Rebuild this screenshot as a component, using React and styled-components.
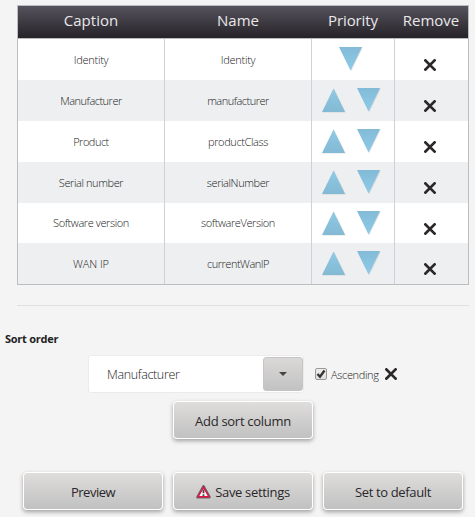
import React from "react";
import styled, { createGlobalStyle } from "styled-components";

const GlobalStyle = createGlobalStyle`
  * { box-sizing: border-box; }
  body {
    margin: 0;
    background: #f4f4f4;
    color: #222;
    font-family: "Open Sans", "Noto Sans", sans-serif;
    overflow: hidden;
  }
`;

const Page = styled.main`
  width: 475px;
  height: 517px;
  padding-top: 5px;
  overflow: hidden;
`;

const Table = styled.section`
  width: 452px;
  height: 280px;
  margin-left: 17px;
  border: 1px solid #bcbdc0;
  overflow: hidden;
`;

const Row = styled.div`
  display: grid;
  grid-template-columns: 147px 147px 83px 73px;
  height: ${(p) => p.$height || 41}px;
  background: ${(p) => (p.$shaded ? "#edeff1" : "#fff")};
`;

const HeaderRow = styled(Row)`
  height: 33px;
  background: linear-gradient(#57535d, #252228);
  border-bottom: 1px solid #bcbdc0;
`;

const Text = styled.span`
  display: block;
  white-space: nowrap;
  font-size: ${(p) => p.$size || 11}px;
  font-weight: ${(p) => p.$weight || 300};
  letter-spacing: ${(p) => p.$spacing || 0}px;
`;

const HeaderCell = styled.div`
  display: flex;
  align-items: center;
  justify-content: center;
  padding: 0 1px 5px 0;
  color: #e8e8ea;
`;

const Cell = styled.div`
  display: flex;
  align-items: center;
  justify-content: center;
  padding-bottom: 1px;
  border-right: 1px solid #cfd1d4;
`;

const PriorityCell = styled(Cell)`
  align-items: flex-start;
  gap: 11px;
  padding: 8px 4px 0 0;
`;

const RemoveCell = styled(Cell)`
  align-items: flex-start;
  padding: 20px 3px 0 0;
  border-right: 0;
`;

const Icon = styled.svg`
  display: block;
  flex: none;
`;

const Divider = styled.hr`
  width: 452px;
  height: 1px;
  margin: 20px 0 0 17px;
  border: 0;
  background: #dfdfdf;
`;

const SectionTitle = styled.h2`
  height: 18px;
  margin: 24px 0 0 5px;
  font-size: 11px;
  line-height: 18px;
  font-weight: 700;
  letter-spacing: -0.25px;
`;

const SortRow = styled.div`
  display: flex;
  align-items: center;
  height: 38px;
  margin: 7px 0 0 88px;
`;

const Select = styled.div`
  display: flex;
  align-items: center;
  justify-content: space-between;
  width: 216px;
  height: 38px;
  padding-left: 18px;
  background: #fff;
  border: 1px solid #ebebeb;
  border-radius: 3px;
`;

const SelectToggle = styled.div`
  display: flex;
  align-items: center;
  justify-content: center;
  width: 40px;
  height: 34px;
  border: 1px solid #c6c4c4;
  border-radius: 3px;
  background: linear-gradient(#dbd9d8, #c2c2c2);
`;

const Checkbox = styled.div`
  width: 12px;
  height: 12px;
  margin: 0 4px 0 11px;
  border: 1px solid #999;
  border-radius: 2px;
  background: linear-gradient(#eee, #ddd);
`;

const Option = styled.div`
  display: flex;
  align-items: center;
  width: 81px;
`;

const Actions = styled.div`
  display: flex;
  justify-content: center;
  gap: 10px;
  width: 440px;
  margin: ${(p) => p.$top}px 0 0 23px;
`;

const Button = styled.button`
  display: flex;
  align-items: center;
  justify-content: center;
  gap: 4px;
  width: 140px;
  height: 38px;
  padding: 1px 0 0;
  border: 1px solid #fff;
  border-radius: 4px;
  background: linear-gradient(#dfdddc, #c1c1c1);
  box-shadow: 0 2px 4px rgba(0, 0, 0, 0.34);
  color: #2a2729;
  font-family: inherit;
`;

function Arrow({ up }) {
  const points = up ? "11.5,0.5 23,24 0,24" : "0,0 23,0 11.5,23.5";
  return (
    <Icon width="24" height="25" viewBox="0 0 24 25">
      <defs>
        <linearGradient id={up ? "up" : "down"} x2="0" y2="1">
          <stop stopColor={up ? "#8fcae6" : "#83bbd7"} />
          <stop offset="1" stopColor={up ? "#83b9d3" : "#8dcbe8"} />
        </linearGradient>
      </defs>
      <polygon points={points} transform="translate(.8 .5)" fill="#999" opacity=".3" />
      <polygon points={points} fill={`url(#${up ? "up" : "down"})`} />
    </Icon>
  );
}

function Cross() {
  return (
    <Icon width="12" height="12" viewBox="0 0 12 12">
      <path d="M1.4 1.4 10.6 10.6M10.6 1.4 1.4 10.6" stroke="#2c2829" strokeWidth="2.7" strokeLinecap="square" />
    </Icon>
  );
}

function Warning() {
  return (
    <Icon width="15" height="14" viewBox="0 0 15 14">
      <path d="M7.5 1.3 13.5 12.2H1.5Z" fill="#fff" stroke="#666" strokeWidth="2.6" strokeLinejoin="round" />
      <path d="M7.5 2.1 12.8 11.7H2.2Z" fill="#fff" stroke="#e51145" strokeWidth="1.4" strokeLinejoin="round" />
      <path d="M7.5 4.5V8.3M7.5 9.3V11" stroke="#444" strokeWidth="1.8" />
    </Icon>
  );
}

const headers = [
  ["Caption", 0],
  ["Name", 0],
  ["Priority", -0.1],
  ["Remove", 0],
];

const rows = [
  ["Identity", -0.25, "Identity", -0.25],
  ["Manufacturer", -0.5, "manufacturer", -0.5],
  ["Product", -0.5, "productClass", -0.4],
  ["Serial number", -0.4, "serialNumber", -0.4],
  ["Software version", -0.4, "softwareVersion", -0.4],
  ["WAN IP", -0.1, "currentWanIP", -0.5],
];

export default function App() {
  return (
    <>
      <GlobalStyle />
      <Page>
        <Table>
          <HeaderRow>
            {headers.map(([label, spacing]) => (
              <HeaderCell key={label}>
                <Text $size={15} $weight={400} $spacing={spacing}>{label}</Text>
              </HeaderCell>
            ))}
          </HeaderRow>
          {rows.map(([caption, captionSpacing, name, nameSpacing], i) => (
            <Row key={name} $shaded={i % 2 === 1} $height={i === 4 ? 40 : 41}>
              <Cell><Text $spacing={captionSpacing}>{caption}</Text></Cell>
              <Cell><Text $spacing={nameSpacing}>{name}</Text></Cell>
              <PriorityCell>
                {i > 0 && <Arrow up />}
                <Arrow />
              </PriorityCell>
              <RemoveCell><Cross /></RemoveCell>
            </Row>
          ))}
        </Table>
        <Divider />
        <SectionTitle>Sort order</SectionTitle>
        <SortRow>
          <Select>
            <Text $size={12.5} $spacing={-0.35}>Manufacturer</Text>
            <SelectToggle>
              <Icon width="8" height="4" viewBox="0 0 8 4"><path d="M0 0H8L4 4Z" fill="#444" /></Icon>
            </SelectToggle>
          </Select>
          <Option>
            <Checkbox>
              <Icon width="10" height="10" viewBox="0 0 10 10">
                <path d="M1.5 5 4 7.7 8.5 1.5" fill="none" stroke="#333" strokeWidth="2.3" />
              </Icon>
            </Checkbox>
            <Text $spacing={-0.35}>Ascending</Text>
          </Option>
          <Cross />
        </SortRow>
        <Actions $top={8}>
          <Button><Text $size={13} $weight={400} $spacing={-0.28}>Add sort column</Text></Button>
        </Actions>
        <Actions $top={33}>
          <Button><Text $size={13} $weight={400} $spacing={-0.5}>Preview</Text></Button>
          <Button><Warning /><Text $size={13} $weight={400} $spacing={-0.32}>Save settings</Text></Button>
          <Button><Text $size={13} $weight={400} $spacing={-0.35}>Set to default</Text></Button>
        </Actions>
      </Page>
    </>
  );
}
